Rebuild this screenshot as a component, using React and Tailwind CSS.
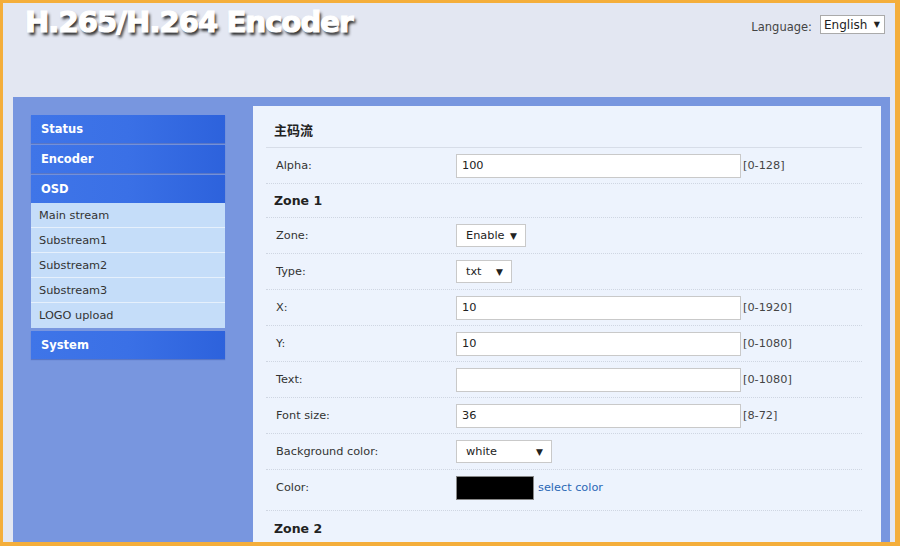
import React from "react";

const font = { fontFamily: '"DejaVu Sans", Verdana, "Noto Sans CJK SC", sans-serif' };

function Select({ value, width }) {
  return (
    <div
      className={`flex items-center justify-between h-[23px] pt-[2px] bg-white border border-[#c9c9c9] pl-[9px] pr-[8px] text-[11.3px] text-[#222] ${width}`}
    >
      <span>{value}</span>
      <span className="text-[9px]">▼</span>
    </div>
  );
}

function TextInput({ value }) {
  return (
    <div className="flex items-center w-[285px] h-[24px] pt-[2px] bg-white border border-[#c9c9c9] pl-[5px] text-[11.3px] text-[#222]">
      {value}
    </div>
  );
}

function Row({ label, children, range, h = "h-[36px]" }) {
  return (
    <div className={`flex items-center ${h} border-b border-dotted border-[#cfd6e2]`}>
      <div className="w-[190px] pl-[10px] pt-[2px] text-[11.3px] text-[#333]">{label}</div>
      <div className="flex items-center">
        {children}
        {range && <span className="ml-[2px] pt-[2px] text-[11.3px] text-[#444]">{range}</span>}
      </div>
    </div>
  );
}

function ZoneTitle({ children, h }) {
  return (
    <div className={`flex items-center ${h} pl-[8px] pt-[2px] text-[12.5px] font-bold text-[#222]`}>
      {children}
    </div>
  );
}

const menu = ["Status", "Encoder", "OSD"];
const subs = ["Main stream", "Substream1", "Substream2", "Substream3", "LOGO upload"];

function MenuItem({ label }) {
  return (
    <div className="flex items-center h-[28px] pl-[10px] pt-[2px] bg-gradient-to-r from-[#3f75e8] via-[#3a70e6] to-[#2d62dc] text-white text-[11.5px] font-bold shadow-[0_1px_1px_rgba(40,70,160,0.4)]">
      {label}
    </div>
  );
}

export default function App() {
  return (
    <div
      style={font}
      className="w-[900px] h-[546px] overflow-hidden bg-[#e3e7f2] border-l-[3px] border-t-[3px] border-r-[5px] border-b-[4px] border-[#f4ae3b] flex flex-col"
    >
      <header className="flex justify-between h-[94px] shrink-0">
        <h1 className="pl-[22px] pt-[2px] text-[29px] leading-[34px] font-bold text-white tracking-[-0.9px] [-webkit-text-stroke:1.2px_white] [text-shadow:2px_3px_3px_#2a2a2a]">
          H.265/H.264 Encoder
        </h1>
        <div className="flex items-start pt-[12px] pr-[10px]">
          <span className="mt-[4px] mr-[8px] text-[11.5px] text-[#444]">Language:</span>
          <div className="flex items-center justify-between w-[65px] h-[19px] bg-white border border-[#aaa] pl-[3px] pr-[4px] text-[12px] text-[#222]">
            <span>English</span>
            <span className="text-[8px]">▼</span>
          </div>
        </div>
      </header>

      <div className="flex flex-1 ml-[10px] mr-[5px] bg-[#7896df] pt-[9px] min-h-0">
        <nav className="w-[194px] ml-[18px] mt-[9px] flex flex-col">
          <MenuItem label={menu[0]} />
          <div className="h-[2px]" />
          <MenuItem label={menu[1]} />
          <div className="h-[2px]" />
          <MenuItem label={menu[2]} />
          <div className="flex flex-col bg-[#c5ddf9]">
            {subs.map((s, i) => (
              <div
                key={s}
                className={`flex items-center h-[25px] pl-[8px] pt-[2px] text-[11.3px] text-[#333] ${i < subs.length - 1 ? "border-b border-[#e6f0fc]" : ""}`}
              >
                {s}
              </div>
            ))}
          </div>
          <div className="h-[3px]" />
          <MenuItem label="System" />
        </nav>

        <main className="ml-[28px] w-[628px] bg-[#edf3fd] pl-[13px] pr-[19px]">
          <div className="flex items-end h-[42px] pb-[7px] pl-[8px] border-b border-[#d7dde8] text-[13px] font-bold text-[#222]">
            主码流
          </div>
          <Row label="Alpha:" range="[0-128]">
            <TextInput value="100" />
          </Row>
          <div className="border-b border-dotted border-[#cfd6e2]">
            <ZoneTitle h="h-[33px]">Zone 1</ZoneTitle>
          </div>
          <Row label="Zone:">
            <Select value="Enable" width="w-[70px]" />
          </Row>
          <Row label="Type:">
            <Select value="txt" width="w-[56px]" />
          </Row>
          <Row label="X:" range="[0-1920]">
            <TextInput value="10" />
          </Row>
          <Row label="Y:" range="[0-1080]">
            <TextInput value="10" />
          </Row>
          <Row label="Text:" range="[0-1080]">
            <TextInput value="" />
          </Row>
          <Row label="Font size:" range="[8-72]">
            <TextInput value="36" />
          </Row>
          <Row label="Background color:">
            <Select value="white" width="w-[96px]" />
          </Row>
          <Row label="Color:" h="h-[41px] pb-[5px]">
            <div className="w-[78px] h-[24px] bg-black border border-[#888]" />
            <span className="ml-[4px] pt-[2px] text-[11.3px] text-[#2a67b5]">select color</span>
          </Row>
          <ZoneTitle h="h-[34px]">Zone 2</ZoneTitle>
        </main>
      </div>
    </div>
  );
}
